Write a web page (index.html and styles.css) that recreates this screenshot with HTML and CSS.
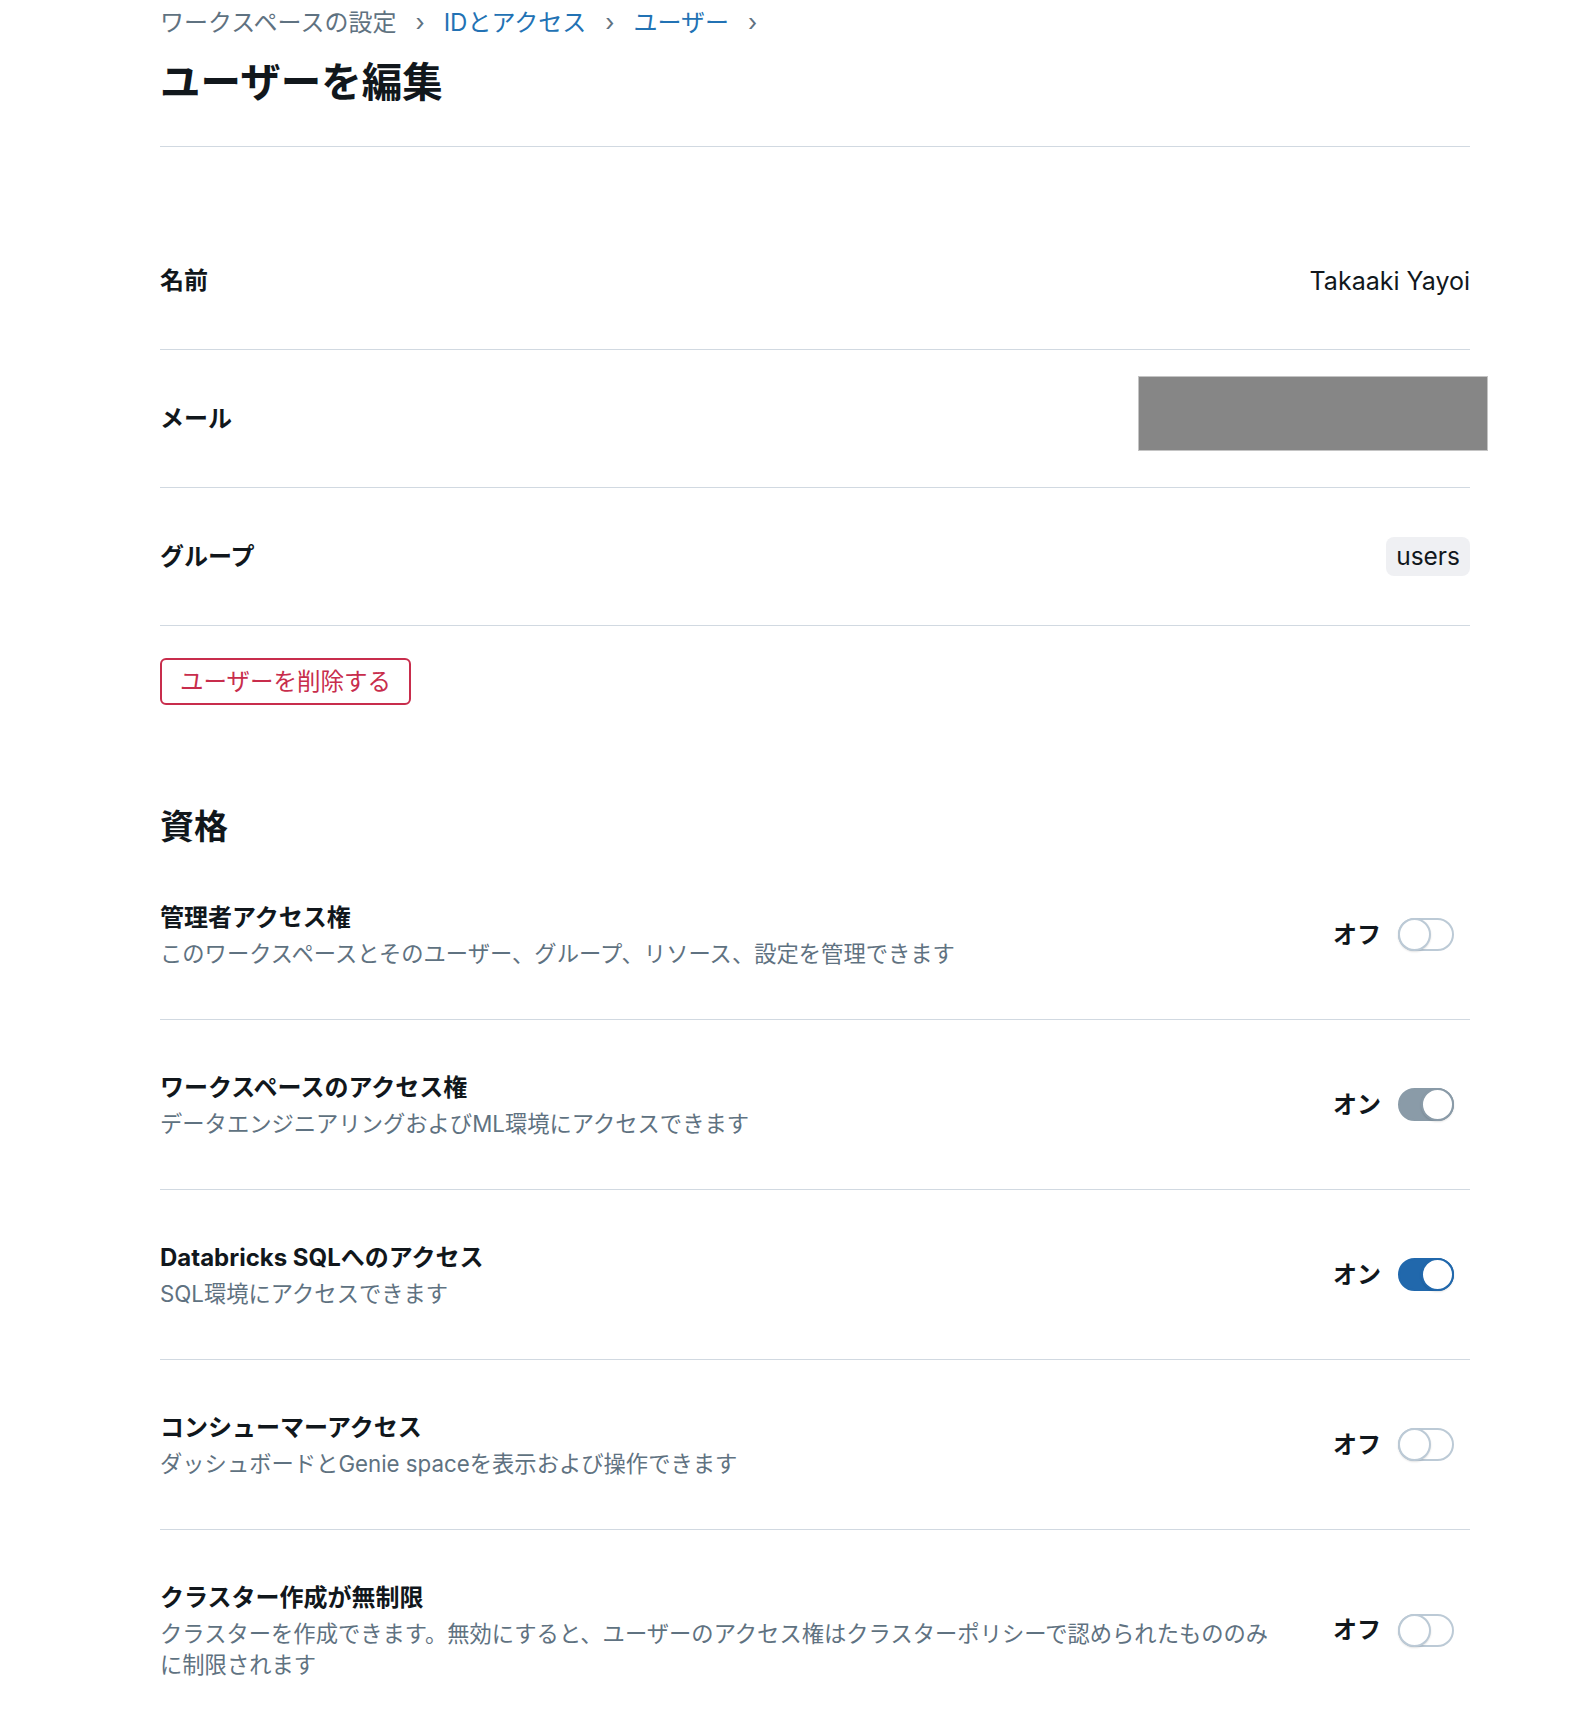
FILE: index.html
```html
<!DOCTYPE html>
<html lang="ja">
<head>
<meta charset="utf-8">
<title>ユーザーを編集</title>
<link rel="stylesheet" href="styles.css">
</head>
<body>
<div class="page">
  <nav class="crumbs">
    <span class="crumb">ワークスペースの設定</span><span class="sep">›</span>
    <a class="crumb link" href="#">IDとアクセス</a><span class="sep">›</span>
    <a class="crumb link" href="#">ユーザー</a><span class="sep">›</span>
  </nav>
  <h1 class="title">ユーザーを編集</h1>

  <div class="details">
    <div class="row">
      <div class="row-label">名前</div>
      <div class="row-value">Takaaki Yayoi</div>
    </div>
    <div class="row">
      <div class="row-label">メール</div>
      <div class="row-value"></div>
      <div class="redact"></div>
    </div>
    <div class="row">
      <div class="row-label">グループ</div>
      <span class="tag">users</span>
    </div>
  </div>

  <button class="danger">ユーザーを削除する</button>

  <h2 class="section">資格</h2>

  <div class="perms">
    <div class="perm">
      <div class="perm-text">
        <div class="perm-title">管理者アクセス権</div>
        <div class="perm-desc">このワークスペースとそのユーザー、グループ、リソース、設定を管理できます</div>
      </div>
      <div class="control">
        <span class="state">オフ</span>
        <span class="toggle"><span class="knob"></span></span>
      </div>
    </div>
    <div class="perm">
      <div class="perm-text">
        <div class="perm-title">ワークスペースのアクセス権</div>
        <div class="perm-desc">データエンジニアリングおよびML環境にアクセスできます</div>
      </div>
      <div class="control">
        <span class="state">オン</span>
        <span class="toggle on disabled"><span class="knob"></span></span>
      </div>
    </div>
    <div class="perm">
      <div class="perm-text">
        <div class="perm-title">Databricks SQLへのアクセス</div>
        <div class="perm-desc">SQL環境にアクセスできます</div>
      </div>
      <div class="control">
        <span class="state">オン</span>
        <span class="toggle on"><span class="knob"></span></span>
      </div>
    </div>
    <div class="perm">
      <div class="perm-text">
        <div class="perm-title">コンシューマーアクセス</div>
        <div class="perm-desc">ダッシュボードとGenie spaceを表示および操作できます</div>
      </div>
      <div class="control">
        <span class="state">オフ</span>
        <span class="toggle"><span class="knob"></span></span>
      </div>
    </div>
    <div class="perm last">
      <div class="perm-text">
        <div class="perm-title">クラスター作成が無制限</div>
        <div class="perm-desc">クラスターを作成できます。無効にすると、ユーザーのアクセス権はクラスターポリシーで認められたもののみに制限されます</div>
      </div>
      <div class="control">
        <span class="state">オフ</span>
        <span class="toggle"><span class="knob"></span></span>
      </div>
    </div>
  </div>
</div>
</body>
</html>
```

FILE: styles.css
```css
html, body {
  margin: 0;
  padding: 0;
  background: #ffffff;
}

body {
  font-family: Inter, "Noto Sans CJK JP", sans-serif;
  color: #11171c;
}

.page {
  width: 1310px;
  padding: 8px 0 0 160px;
}

.crumbs {
  display: flex;
  align-items: center;
  height: 30px;
  font-size: 24px;
  line-height: 30px;
}

.crumb {
  color: #5f7281;
  text-decoration: none;
}

.crumb.link {
  color: #2272b4;
}

.sep {
  color: #5f7281;
  margin: 0 19px;
  font-size: 24px;
}

.title {
  margin: 21px 0 0;
  font-size: 40.5px;
  line-height: 48px;
  font-weight: 700;
  padding-bottom: 39px;
  border-bottom: 1px solid #d1d9e1;
}

.details {
  margin-top: 65px;
}

.row {
  position: relative;
  display: flex;
  align-items: center;
  justify-content: space-between;
  height: 137px;
  border-bottom: 1px solid #d1d9e1;
}

.row-label {
  font-size: 24px;
  font-weight: 700;
  line-height: 34px;
}

.row-value {
  font-size: 25px;
  line-height: 34px;
}

.redact {
  position: absolute;
  top: 26px;
  right: -18px;
  width: 348px;
  height: 73px;
  background: #868686;
  border: 1px solid #c4c4c4;
}

.tag {
  display: inline-block;
  height: 39px;
  line-height: 39px;
  padding: 0 10px;
  font-size: 24.5px;
  background: #eff0f3;
  border-radius: 8px;
}

.danger {
  display: block;
  margin-top: 32px;
  font-family: inherit;
  font-size: 23.5px;
  line-height: 31px;
  padding: 6px 18px;
  color: #c82d4c;
  background: #ffffff;
  border: 2px solid #c82d4c;
  border-radius: 6px;
}

.section {
  margin: 102px 0 3px;
  font-size: 34px;
  line-height: 40px;
  font-weight: 700;
}

.perm {
  display: flex;
  align-items: center;
  gap: 50px;
  padding: 50px 0;
  border-bottom: 1px solid #d1d9e1;
}

.perm.last {
  border-bottom: none;
}

.perm-text {
  flex: 1;
}

.perm-title {
  font-size: 24px;
  line-height: 36px;
  font-weight: 700;
  margin-bottom: 2px;
}

.perm-desc {
  font-size: 22.3px;
  line-height: 31px;
  color: #5f7281;
}

.control {
  display: flex;
  align-items: center;
  gap: 17px;
  margin-right: 16px;
}

.state {
  font-size: 24px;
  font-weight: 700;
  line-height: 34px;
}

.toggle {
  position: relative;
  display: block;
  width: 56px;
  height: 33px;
  box-sizing: border-box;
  border: 2px solid #bccad6;
  border-radius: 17px;
  background: #ffffff;
}

.knob {
  position: absolute;
  top: -2px;
  left: -2px;
  width: 33px;
  height: 33px;
  box-sizing: border-box;
  border-radius: 50%;
  background: #ffffff;
  border: 2px solid #bccad6;
  box-shadow: 0 1px 2px rgba(0, 0, 0, 0.12);
}

.toggle.on {
  background: #2168ac;
  border-color: #2168ac;
}

.toggle.on .knob {
  left: auto;
  right: -2px;
  border-color: #2168ac;
}

.toggle.on.disabled {
  background: #8a9ba8;
  border-color: #8a9ba8;
}

.toggle.on.disabled .knob {
  border-color: #8a9ba8;
}
```
